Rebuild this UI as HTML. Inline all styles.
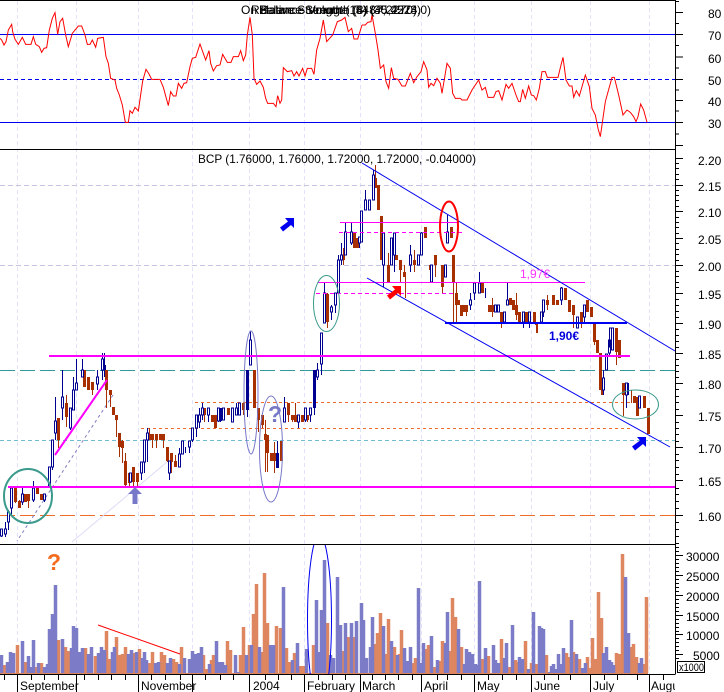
<!DOCTYPE html>
<html><head><meta charset="utf-8"><title>BCP chart</title>
<style>
html,body{margin:0;padding:0;background:#fff}
svg{display:block}
text{font-family:"Liberation Sans",Arial,sans-serif;font-size:12px;fill:#000}
</style></head><body>
<svg width="724" height="692" viewBox="0 0 724 692" xmlns="http://www.w3.org/2000/svg">
<defs>
<clipPath id="vol"><rect x="0" y="545" width="675" height="129"/></clipPath>
<clipPath id="xa"><rect x="0" y="675" width="675" height="17"/></clipPath>
</defs>
<rect width="724" height="692" fill="#fff"/>

<!-- vertical grid -->
<path d="M17.5 1V674M76.5 1V674M138.5 1V674M192.5 1V674M249.5 1V674M304.5 1V674M360.5 1V674M421.5 1V674M474.5 1V674M531.5 1V674M590.5 1V674M649.5 1V674" stroke="#e2e2fb" stroke-width="1" stroke-dasharray="4 3" fill="none"/>

<!-- RSI levels -->
<path d="M0 34.5H675M0 122.5H675" stroke="#0000f0" stroke-width="1" fill="none"/>
<path d="M0 79.5H675" stroke="#0000f0" stroke-width="1" stroke-dasharray="4 3" fill="none"/>
<!-- RSI -->
<polyline transform="scale(.33333)" fill="none" stroke="#ff0000" stroke-width="3" points="0,115 5,120 12,135 18,125 25,90 35,73 38,95 45,118 55,133 67,112 77,133 93,133 100,110 107,133 118,140 125,157 132,145 140,143 148,90 157,55 165,38 173,103 180,65 188,55 197,105 205,140 217,100 235,78 245,78 255,105 262,133 270,133 277,120 287,142 293,115 310,112 318,170 325,190 332,235 345,240 350,265 358,285 367,315 376,367 385,367 390,332 397,340 405,322 415,333 428,243 438,208 447,222 455,238 480,238 490,262 505,317 512,275 520,288 528,288 535,250 545,265 552,250 560,248 570,200 577,175 587,172 600,132 617,180 627,152 632,190 640,213 650,197 660,195 668,163 682,187 693,187 700,170 715,170 722,152 730,182 737,165 742,105 750,52 757,105 762,235 770,253 780,243 790,262 797,295 803,310 820,310 828,320 833,287 840,310 845,300 850,203 862,215 875,212 882,228 890,215 897,228 908,205 915,228 922,205 935,205 942,223 950,150 960,115 970,60 980,125 998,105 1012,65 1025,60 1035,52 1045,95 1055,85 1062,117 1073,117 1086,75"/>
<polyline transform="translate(362 0) scale(.33333)" fill="none" stroke="#ff0000" stroke-width="3" points="0,75 10,75 17,67 27,65 30,45 40,100 48,150 55,205 65,195 72,245 80,265 88,203 95,235 108,238 120,258 130,258 145,220 155,248 165,230 177,215 185,185 195,210 200,262 207,250 215,257 225,235 235,250 240,280 255,190 265,205 272,280 280,295 295,295 300,300 315,300 330,270 350,240 360,270 370,262 378,292 395,292 402,275 410,272 420,300 432,253 440,265 450,250 462,285 470,305 475,305 482,268 490,295 500,258 508,285 515,287 523,300 532,265 540,215 550,215 556,232 588,232 597,195 603,172 612,240 622,258 630,258 635,292 643,272 652,288 670,225 682,260 690,325 700,345 708,385 715,410 730,305 750,232 757,232 770,285 783,345 795,330 805,337 815,350 822,365 828,350 836,312 845,330 855,367"/>
<text x="241" y="14" textLength="176" lengthAdjust="spacing">On Balance Volume (5487,2270)</text>
<text x="251" y="14" textLength="170" lengthAdjust="spacing">Relative Strength (14) (30.4523)</text>
<text x="259" y="14" textLength="172" lengthAdjust="spacing">Balance Strength (8) (45,2274,0)</text>

<!-- horizontal price guides -->
<path d="M0 185.5H675M0 265.5H675" stroke="#c4c4e4" stroke-dasharray="5 3" fill="none"/>
<path d="M0 370.5H675" stroke="#339999" stroke-width="1" stroke-dasharray="15 5" fill="none"/>
<path d="M0 440.5H675" stroke="#70bcd0" stroke-width="1" stroke-dasharray="4 3" fill="none"/>
<path d="M0 515.5H675" stroke="#ee6c28" stroke-width="1" stroke-dasharray="15 5" fill="none"/>
<path d="M195 402.5H630M141 428.5H630" stroke="#ee6c28" stroke-dasharray="3 3" fill="none"/>

<!-- diagonals -->
<path d="M113 395L17 541" stroke="#8080c4" stroke-dasharray="3 3" fill="none"/>
<path d="M167 462L72 542" stroke="#dcdcf6" fill="none"/>

<!-- candles -->
<g transform="translate(.5 0)" fill="none">
<path stroke="#a83000" stroke-width="1" d="M15 488V503M19 500V508M25 494V502M28 494V508M37 487V494M41 494V500M58 418V448M66 395V427M84 370V387M88 377V390M92 382V395M106 370V408M110 390V407M113 407V415M116 415V437M119 433V457M122 440V463M125 453V487M129 473V486M133 467V486M137 473V486M149 428V440M152 434V448M156 434V448M160 434V440M163 434V448M167 447V462M171 453V473M175 455V467M204 408V422M212 415V422M215 415V428M228 408V415M243 403V415M254 370V408M258 408V432M262 415V428M265 420V472M267 435V472M271 453V461M274 442V473M281 441V461M288 403V422M292 415V422M295 403V422M302 415V422M307 415V422M327 293V328M343 248V265M354 233V248M357 238V248M375 165V188M378 185V210M381 216V260M388 253V282M396 255V260M400 260V282M404 265V277M405 272V298M414 250V272M425 227V238M430 265V282M435 255V277M442 265V293M451 227V238M453 255V322M456 283V323M461 305V316M464 305V312M466 305V316M482 282V293M489 305V312M492 298V317M501 312V328M510 298V305M513 300V310M516 293V320M519 312V322M526 312V322M534 312V322M536 322V333M537 322V333M547 295V310M553 295V305M557 300V305M565 288V300M569 300V312M573 305V328M581 312V328M587 300V312M591 307V317M594 323V345M597 340V353M600 353V390M602 378V395M616 328V365M619 340V358M623 383V416M631 390V403M634 396V403M637 397V416M644 396V408M648 408V434"/>
<path stroke="#a83000" stroke-width="3" d="M15 488V502M19 501V508M25 494V502M28 494V501M37 487V494M41 494V500M58 418V440M66 403V417M84 370V387M88 377V390M92 382V390M106 370V390M110 390V395M113 407V415M116 415V420M119 433V447M122 441V448M125 461V485M129 473V483M133 467V482M137 473V482M149 434V440M152 434V440M156 434V440M160 434V440M163 434V440M167 447V461M171 453V462M175 461V467M204 408V415M212 415V422M215 415V428M228 408V415M243 403V410M254 370V408M258 408V420M262 415V425M265 434V440M267 435V453M271 453V461M274 453V461M281 441V461M288 403V415M292 415V420M295 415V422M302 415V422M307 415V420M327 294V322M343 255V260M354 233V248M357 238V248M375 178V188M378 185V210M381 216V260M388 265V282M396 255V260M400 260V270M404 272V277M414 260V265M425 227V238M430 265V270M435 255V265M442 265V287M451 227V238M453 255V283M456 293V305M458 300V305M461 305V316M464 305V312M466 305V312M482 282V293M489 305V312M492 305V312M501 312V322M510 298V305M513 300V310M516 305V315M519 312V322M526 312V322M534 312V322M536 322V325M547 300V305M553 295V305M557 300V305M565 288V300M569 300V312M573 305V315M581 312V322M587 300V312M591 307V317M594 323V342M597 340V353M600 353V390M602 378V395M616 328V352M619 340V358M623 383V395M634 396V403M637 397V416M644 396V408M648 408V434"/>
<path stroke="#000090" stroke-width="1" d="M1 529V537M5 522V537M8 510V530M11 488V515M22 488V505M33 481V502M44 494V502M49 467V487M52 440V470M55 397V440M62 370V420M70 408V430M73 377V410M76 359V390M82 359V377M97 370V390M102 353V380M104 353V377M130 473V482M141 462V480M144 440V473M147 428V462M169 461V480M179 448V467M182 441V454M185 447V453M189 441V453M192 428V442M196 415V437M199 408V428M202 403V420M208 408V422M218 408V422M220 408V422M223 408V420M232 408V422M236 403V415M239 403V415M247 370V417M250 331V365M277 441V468M284 397V422M298 415V428M305 408V422M310 408V422M314 370V415M317 363V380M321 333V375M324 282V323M331 305V320M335 293V313M338 255V293M341 243V265M345 222V253M351 222V245M359 237V248M361 211V242M365 190V210M369 200V210M373 170V200M383 232V287M391 238V265M394 233V272M410 245V272M418 255V265M421 232V255M431 265V282M445 265V277M447 215V243M470 293V310M474 283V300M479 272V293M485 288V298M495 305V312M498 305V312M504 312V322M507 282V305M523 312V328M529 312V328M541 312V322M543 300V317M561 287V305M577 317V328M584 305V322M603 370V395M606 354V370M609 340V355M610 328V347M612 328V350M626 383V408M628 383V395M639 396V408"/>
<path stroke="#000090" stroke-width="1" fill="#fff" d="M0 529h2V536h-2zM4 529h2V534h-2zM7 512h2V522h-2zM10 488h2V508h-2zM21 494h2V502h-2zM32 488h2V500h-2zM43 494h2V500h-2zM48 467h2V487h-2zM51 440h2V467h-2zM54 421h2V433h-2zM61 397h2V408h-2zM69 408h2V428h-2zM72 390h2V410h-2zM75 383h2V390h-2zM81 370h2V377h-2zM96 377h2V384h-2zM101 359h2V370h-2zM129 473h2V482h-2zM140 462h2V473h-2zM143 440h2V462h-2zM146 433h2V440h-2zM168 461h2V473h-2zM178 454h2V467h-2zM181 441h2V454h-2zM188 441h2V447h-2zM191 428h2V440h-2zM195 415h2V428h-2zM198 415h2V422h-2zM201 408h2V415h-2zM207 408h2V415h-2zM217 408h2V421h-2zM222 408h2V420h-2zM231 408h2V422h-2zM235 408h2V415h-2zM238 403h2V415h-2zM249 340h2V365h-2zM283 408h2V422h-2zM297 415h2V422h-2zM304 408h2V420h-2zM309 408h2V415h-2zM316 370h2V377h-2zM320 333h2V364h-2zM323 293h2V323h-2zM330 307h2V312h-2zM334 293h2V305h-2zM337 260h2V293h-2zM340 255h2V260h-2zM344 232h2V255h-2zM350 232h2V243h-2zM358 237h2V243h-2zM360 211h2V242h-2zM364 200h2V210h-2zM368 200h2V210h-2zM372 175h2V200h-2zM382 233h2V265h-2zM390 238h2V265h-2zM393 233h2V255h-2zM409 255h2V265h-2zM417 255h2V265h-2zM420 233h2V255h-2zM430 265h2V282h-2zM444 265h2V277h-2zM446 232h2V243h-2zM469 300h2V305h-2zM473 283h2V293h-2zM478 283h2V293h-2zM494 305h2V312h-2zM497 305h2V312h-2zM503 312h2V322h-2zM506 300h2V305h-2zM522 312h2V322h-2zM528 312h2V322h-2zM540 312h2V322h-2zM542 300h2V312h-2zM560 288h2V300h-2zM576 317h2V328h-2zM583 305h2V317h-2zM602 378h2V390h-2zM605 354h2V370h-2zM608 340h2V353h-2zM609 328h2V347h-2zM611 328h2V350h-2zM625 383h2V395h-2zM638 396h2V408h-2z"/>
<path stroke="#000090" stroke-width="3" d="M104 365V370M220 408V421M247 370V410M277 453V468M314 370V408"/>
</g>

<!-- horizontal studies -->
<path d="M340 222.5H459M318 282.5H585" stroke="#ff00ff" stroke-width="1" fill="none"/>
<path d="M339 232.5H462M316 293.5H455" stroke="#ff00ff" stroke-dasharray="4 3" fill="none"/>
<path d="M49 356H630M8 487H675" stroke="#ff00ff" stroke-width="2" fill="none"/>
<path d="M55 455L107 380" stroke="#ff00ff" stroke-width="2" fill="none"/>
<path d="M445 323H627" stroke="#0000f0" stroke-width="2" fill="none"/>
<path d="M362 163L675 351M367 278L670 447" stroke="#0000f0" stroke-width="1" fill="none"/>

<!-- ellipses -->
<g fill="none">
<ellipse cx="28" cy="496" rx="24" ry="27" stroke="#3a9a8c" stroke-width="2"/>
<ellipse cx="326.5" cy="303.5" rx="13" ry="28" stroke="#3a9a8c"/>
<ellipse cx="251" cy="392.5" rx="7" ry="61.5" stroke="#7878c8"/>
<ellipse cx="271" cy="449" rx="11.5" ry="53" stroke="#7878c8"/>
<ellipse cx="449" cy="226.5" rx="9" ry="25" stroke="#ff0000" stroke-width="2"/>
<ellipse cx="635.5" cy="404.5" rx="23" ry="14.5" stroke="#3a9a8c"/>
</g>

<!-- arrows -->
<path transform="translate(280 218)" fill="#0000f0" d="M14 0H5L8 3.5L0 9.5L3 13.5L11 7L14 10Z"/>
<path transform="translate(387 286)" fill="#ff0000" d="M14 0H5L8 3.5L0 9.5L3 13.5L11 7L14 10Z"/>
<path transform="translate(632 437)" fill="#0000f0" d="M14 0H5L8 3.5L0 9.5L3 13.5L11 7L14 10Z"/>
<path fill="#7878c8" d="M135 487L142 494H137.5V504H132.5V494H128Z"/>

<text x="275" y="422" text-anchor="middle" style="font-size:23px;font-weight:bold;fill:#7878c8">?</text>
<text x="54" y="570" text-anchor="middle" style="font-size:23px;font-weight:bold;fill:#f46c20">?</text>
<text x="520" y="278" style="fill:#ff33ff">1,97€</text>
<text x="549" y="340" style="font-weight:bold;fill:#0000dd">1,90€</text>
<text x="198" y="163" textLength="278" lengthAdjust="spacingAndGlyphs">BCP (1.76000, 1.76000, 1.72000, 1.72000, -0.04000)</text>

<!-- volume -->
<path d="M0 673.5H648" stroke="#de8660" fill="none"/>
<g transform="translate(1.5 0)" fill="none" stroke-width="3.5">
<path stroke="#de8660" d="M3 665V673M16 645V673M24 662V673M35 667V673M40 663V673M57 640V673M64 647V673M67 651V673M84 648V673M94 656V673M105 631V673M108 659V673M115 637V673M118 655V673M121 654V673M124 647V673M132 653V673M138 649V673M148 663V673M151 652V673M160 652V673M163 655V673M172 659V673M175 662V673M180 647V673M202 655V673M205 669V673M210 660V673M212 655V673M226 641V673M229 650V673M239 655V673M242 627V673M248 645V673M252 614V673M255 584V673M261 652V673M263 573V673M266 623V673M275 626V673M279 628V673M285 648V673M288 662V673M293 653V673M299 666V673M302 666V673M312 645V673M326 623V673M342 651V673M347 637V673M352 637V673M373 644V673M376 633V673M379 613V673M384 654V673M387 619V673M393 647V673M398 654V673M400 630V673M411 663V673M414 658V673M424 649V673M427 645V673M433 667V673M439 661V673M441 641V673M449 651V673M451 598V673M454 617V673M460 647V673M481 659V673M487 656V673M500 639V673M508 667V673M514 660V673M516 662V673M524 641V673M530 663V673M535 664V673M545 655V673M565 653V673M568 657V673M572 652V673M578 659V673M586 657V673M589 668V673M591 638V673M594 659V673M597 592V673M600 618V673M615 653V673M618 654V673M621 554V673M629 647V673M632 644V673M635 657V673M642 664V673M645 597V673"/>
<path stroke="#7b7bc8" d="M0 655V673M6 662V673M9 652V673M12 653V673M21 641V673M27 656V673M30 667V673M32 640V673M37 663V673M43 667V673M46 664V673M48 629V673M51 614V673M54 585V673M61 639V673M70 648V673M72 626V673M75 628V673M78 652V673M81 648V673M87 654V673M90 647V673M97 653V673M100 647V673M103 650V673M111 652V673M113 647V673M127 654V673M130 650V673M135 652V673M141 658V673M143 652V673M145 660V673M154 663V673M157 662V673M166 663V673M169 658V673M178 664V673M183 658V673M188 659V673M191 651V673M194 654V673M197 653V673M200 647V673M208 664V673M215 641V673M218 662V673M221 662V673M224 665V673M234 655V673M237 672V673M245 655V673M250 645V673M258 647V673M269 645V673M272 645V673M282 587V673M291 660V673M296 643V673M305 649V673M315 600V673M318 652V673M320 610V673M323 560V673M329 655V673M332 658V673M336 577V673M339 625V673M344 623V673M350 623V673M355 621V673M360 603V673M362 620V673M365 658V673M369 647V673M371 617V673M382 626V673M390 641V673M396 655V673M403 648V673M406 661V673M409 647V673M417 588V673M419 663V673M422 643V673M430 636V673M436 660V673M444 643V673M446 612V673M457 629V673M463 664V673M465 649V673M468 652V673M471 654V673M474 664V673M475 665V673M478 581V673M484 648V673M492 645V673M494 660V673M497 663V673M503 658V673M505 643V673M511 625V673M518 657V673M521 659V673M527 669V673M532 612V673M538 626V673M540 628V673M542 629V673M548 672V673M550 666V673M552 664V673M554 669V673M557 654V673M559 664V673M562 648V673M570 620V673M575 654V673M581 668V673M584 663V673M602 653V673M605 647V673M608 660V673M610 662V673M612 665V673M624 577V673M627 633V673M638 663V673M640 658V673"/>
</g>
<path d="M98 625L180 654" stroke="#ff0000" stroke-width="1" fill="none"/>
<ellipse cx="319.5" cy="620" rx="12" ry="85" fill="none" stroke="#0000f0" stroke-width="1" clip-path="url(#vol)"/>

<!-- frame -->
<path d="M0 .5H675M0 149.5H675M0 544.5H675M0 674.5H675M675.5 0V674.5" stroke="#000" stroke-width="1" fill="none"/>

<!-- right axis ticks -->
<path stroke="#000" fill="none" d="M675 12.5h8M675 34.5h8M675 57h8M675 79.5h8M675 100.5h8M675 122.5h8M675 145.5h8M675 1.5h4M675 23.5h4M675 45.5h4M675 68h4M675 90h4M675 111h4M675 134h4
M675 158.5h8M675 185.5h8M675 211.5h8M675 238.5h8M675 265.5h8M675 293.5h8M675 323.5h8M675 353.5h8M675 383.5h8M675 415.5h8M675 447.5h8M675 480.5h8M675 515.5h8
M675 163.5h4M675 168.5h4M675 174.5h4M675 179.5h4M675 190.5h4M675 195.5h4M675 200.5h4M675 206.5h4M675 217.5h4M675 222.5h4M675 227.5h4M675 233.5h4M675 243.5h4M675 249.5h4M675 254.5h4M675 260.5h4M675 271.5h4M675 276.5h4M675 282.5h4M675 287.5h4M675 299.5h4M675 305.5h4M675 311.5h4M675 317.5h4M675 329.5h4M675 335.5h4M675 341.5h4M675 347.5h4M675 359.5h4M675 365.5h4M675 371.5h4M675 377.5h4M675 389.5h4M675 396.5h4M675 402.5h4M675 409.5h4M675 422.5h4M675 428.5h4M675 434.5h4M675 441.5h4M675 454.5h4M675 460.5h4M675 467.5h4M675 474.5h4M675 488.5h4M675 494.5h4M675 501.5h4M675 508.5h4M675 522.5h4M675 529.5h4M675 536.5h4M675 543.5h4
M675 555.5h8M675 575.5h8M675 595.5h8M675 615.5h8M675 634.5h8M675 654.5h8
M675 547.5h4M675 551.5h4M675 559.5h4M675 563.5h4M675 567.5h4M675 571.5h4M675 579.5h4M675 583.5h4M675 587.5h4M675 591.5h4M675 599.5h4M675 603.5h4M675 607.5h4M675 611.5h4M675 619.5h4M675 623.5h4M675 627.5h4M675 631.5h4M675 638.5h4M675 642.5h4M675 646.5h4M675 650.5h4M675 658.5h4"/>

<!-- bottom axis ticks -->
<path stroke="#000" fill="none" d="M17.5 675V692M76.5 675V692M138.5 675V692M192.5 675V692M249.5 675V692M304.5 675V692M360.5 675V692M421.5 675V692M474.5 675V692M531.5 675V692M590.5 675V692M649.5 675V692
M4.5 675v5M31.5 675v5M44.5 675v5M58.5 675v5M84.5 675v5M98.5 675v5M111.5 675v5M125.5 675v5M151.5 675v5M165.5 675v5M180.5 675v5M205.5 675v5M220.5 675v5M233.5 675v5M265.5 675v5M278.5 675v5M291.5 675v5M318.5 675v5M332.5 675v5M345.5 675v5M372.5 675v5M385.5 675v5M398.5 675v5M412.5 675v5M437.5 675v5M447.5 675v5M461.5 675v5M488.5 675v5M502.5 675v5M516.5 675v5M544.5 675v5M558.5 675v5M570.5 675v5M604.5 675v5M617.5 675v5M637.5 675v5M663.5 675v5"/>

<!-- labels right -->
<g>
<text x="708" y="18">80</text><text x="708" y="40">70</text><text x="708" y="63">60</text><text x="708" y="85">50</text><text x="708" y="106">40</text><text x="708" y="128">30</text>
<text x="698" y="165">2.20</text><text x="698" y="191">2.15</text><text x="698" y="217">2.10</text><text x="698" y="244">2.05</text><text x="698" y="271">2.00</text><text x="698" y="299">1.95</text><text x="698" y="329">1.90</text><text x="698" y="359">1.85</text><text x="698" y="389">1.80</text><text x="698" y="421">1.75</text><text x="698" y="453">1.70</text><text x="698" y="486">1.65</text><text x="698" y="521">1.60</text>
<text x="686" y="561">30000</text><text x="686" y="581">25000</text><text x="686" y="601">20000</text><text x="686" y="621">15000</text><text x="686" y="640">10000</text><text x="693" y="660">5000</text>
</g>
<rect x="677.5" y="661.5" width="27" height="11" fill="#fff" stroke="#000"/>
<text x="679" y="671" style="font-size:11px" textLength="25" lengthAdjust="spacingAndGlyphs">x1000</text>

<!-- months -->
<g clip-path="url(#xa)">
<text x="20" y="690">September</text><text x="141" y="690">November</text><text x="253" y="690">2004</text><text x="307" y="690">February</text><text x="362" y="690">March</text><text x="424" y="690">April</text><text x="477" y="690">May</text><text x="534" y="690">June</text><text x="593" y="690">July</text><text x="651" y="690">August</text>
</g>
</svg>
</body></html>
